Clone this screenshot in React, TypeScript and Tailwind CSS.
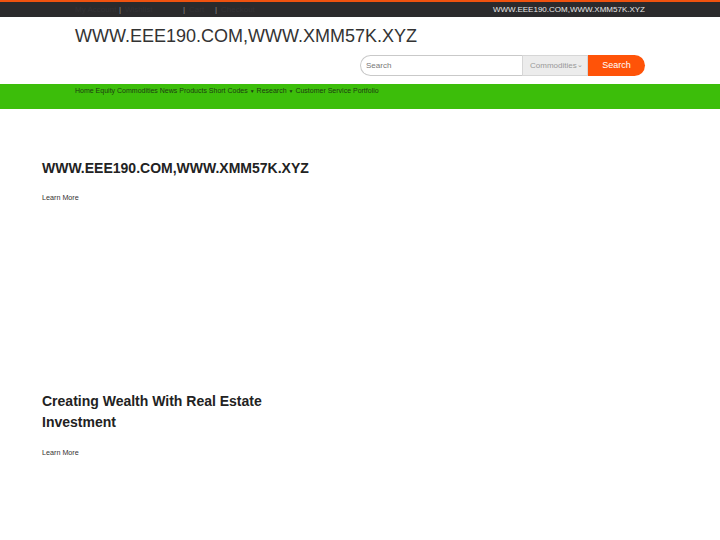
import React from "react";

const font = { fontFamily: '"Liberation Sans", Arial, sans-serif' };

export default function App() {
  return (
    <div className="w-[720px] min-h-[540px] bg-white text-[#222]" style={font}>
      {/* top bar */}
      <div className="h-[2px] bg-[#f0520f]" />
      <div className="h-[15px] bg-[#2b2a2c] flex items-center">
        <div className="w-[570px] mx-auto flex items-center justify-between text-[8px] leading-none">
          <div className="flex items-center text-[#333236]">
            <span className="w-[44px]">My Account</span>
            <span className="w-[6px] text-[#8a8a8a]">|</span>
            <span className="w-[58px]">Wishlist</span>
            <span className="w-[6px] text-[#8a8a8a]">|</span>
            <span className="w-[26px]">Cart</span>
            <span className="w-[6px] text-[#8a8a8a]">|</span>
            <span>Checkout</span>
          </div>
          <span className="text-[#e6e6e6]">WWW.EEE190.COM,WWW.XMM57K.XYZ</span>
        </div>
      </div>

      {/* header */}
      <div className="h-[67px] bg-white">
        <div className="w-[570px] mx-auto pt-[8px]">
          <div className="text-[18px] leading-[22px] text-[#333]">WWW.EEE190.COM,WWW.XMM57K.XYZ</div>
          <div className="flex justify-end mt-[8px]">
            <div className="flex h-[21px] w-[285px]">
              <div className="flex-1 border border-[#c9c9c9] border-r-0 rounded-l-full flex items-center pl-[5px] text-[8px] text-[#777]">
                Search
              </div>
              <div className="w-[66px] bg-[#ececec] border border-[#d6d6d6] flex items-center justify-between px-[7px] text-[8px] text-[#999]">
                <span>Commodities</span>
                <span className="text-[7px]">⌄</span>
              </div>
              <div className="w-[57px] bg-[#ff5308] rounded-r-full flex items-center justify-center text-[9px] text-white">
                Search
              </div>
            </div>
          </div>
        </div>
      </div>

      {/* nav */}
      <div className="h-[25px] bg-[#3cbe0a]">
        <div className="w-[570px] mx-auto pt-[2px] text-[7px] leading-[10px] text-[#1d3d12] whitespace-nowrap">
          Home Equity Commodities News Products Short Codes <span className="text-[5px]">▼</span> Research <span className="text-[5px]">▼</span> Customer Service Portfolio
        </div>
      </div>

      {/* main */}
      <div className="px-[42px]">
        <div className="pt-[50px]">
          <h1 className="text-[14px] leading-[18px] font-bold text-[#222]">WWW.EEE190.COM,WWW.XMM57K.XYZ</h1>
          <div className="mt-[16px] text-[7.2px] leading-[10px] text-[#333]">Learn More</div>
        </div>
        <div className="pt-[188px] w-[270px]">
          <h2 className="text-[14px] leading-[21px] font-bold text-[#222]">Creating Wealth With Real Estate Investment</h2>
          <div className="mt-[15px] text-[7.2px] leading-[10px] text-[#333]">Learn More</div>
        </div>
      </div>
    </div>
  );
}
